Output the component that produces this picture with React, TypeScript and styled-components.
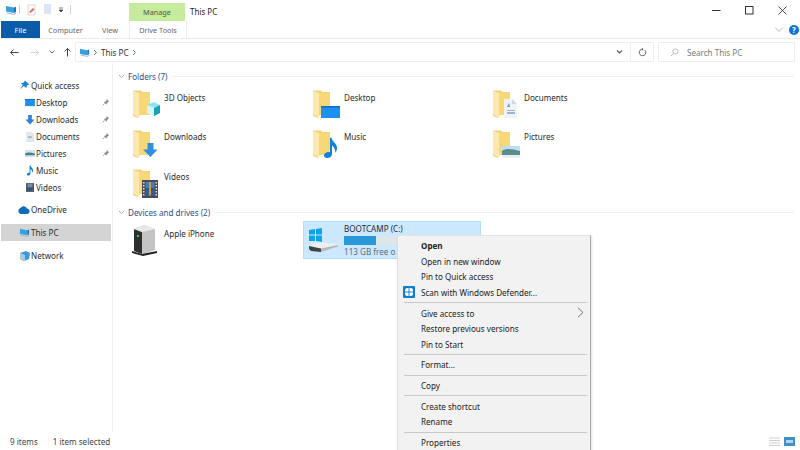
import React from 'react';
import styled, { createGlobalStyle } from 'styled-components';

const Global = createGlobalStyle`
  html, body { margin: 0; padding: 0; background: #fff; overflow: hidden; }
  body { font-family: "Noto Sans", "Open Sans", sans-serif; font-size: 8.1px; color: #2b2b2b; }
`;

const Windowed = styled.div`
  position: relative; width: 800px; height: 450px; overflow: hidden; background: #fff;
  display: flex; flex-direction: column;
`;
const TitleBar = styled.div`display: flex; height: 21px; align-items: stretch; flex: none;`;
const Qat = styled.div`display: flex; align-items: center; gap: 6px; width: 129px; padding-left: 5px; box-sizing: border-box; margin-top: -2px;`;
const QatSep = styled.span<{ $ml?: number }>`width: 1px; height: 9px; background: #cfcfcf; margin-left: ${p => p.$ml ?? 0}px;`;
const ManageTab = styled.div`
  width: 56px; margin-top: 3px; background: #c6eb9f; color: #4a5a3a;
  display: flex; align-items: center; justify-content: center; font-size: 7.3px;
`;
const WindowTitle = styled.div`padding: 2px 0 0 5px; display: flex; align-items: center; font-size: 8px; color: #222; flex: 1;`;
const WinButtons = styled.div`display: flex; align-items: center; gap: 24px; padding-right: 13px; margin-top: -1px;`;

const TabRow = styled.div`display: flex; height: 17px; flex: none; align-items: stretch; border-bottom: 1px solid #ececec; padding-left: 1px;`;
const FileTab = styled.div`width: 39px; background: #0a5ca9; color: #fff; display: flex; align-items: center; justify-content: center; font-size: 7.4px;`;
const Tab = styled.div<{ $w: number }>`width: ${p => p.$w}px; display: flex; align-items: center; justify-content: center; color: #666; font-size: 7.3px;`;
const ToolsTab = styled(Tab)`border-left: 1px solid #ececec; border-right: 1px solid #ececec;`;
const RibbonEnd = styled.div`margin-left: auto; display: flex; align-items: center; gap: 5px; padding-right: 1px;`;
const HelpDot = styled.span`width: 10px; height: 10px; border-radius: 50%; background: #0a73d1; color: #fff; font-size: 8px; font-weight: 700; display: flex; align-items: center; justify-content: center; line-height: 1;`;

const AddressRow = styled.div`display: flex; height: 24px; flex: none; align-items: center; padding: 2px 5px 0 9px; box-sizing: border-box;`;
const NavIcons = styled.div`display: flex; align-items: center; gap: 8px; width: 66px;`;
const AddressBox = styled.div`
  width: 579px; height: 20px; box-sizing: border-box; border: 1px solid #eeeeee; display: flex; align-items: center;
  padding-left: 3px; gap: 3px; font-size: 8.1px; color: #333;
`;
const AddressEnd = styled.div`margin-left: auto; display: flex; height: 100%; align-items: center;`;
const DropCell = styled.div`width: 22px; display: flex; justify-content: center; align-items: center;`;
const RefreshCell = styled.div`width: 22px; height: 100%; border-left: 1px solid #eeeeee; display: flex; align-items: center; justify-content: center;`;
const SearchBox = styled.div`
  margin-left: 4px; flex: 1; height: 20px; box-sizing: border-box; border: 1px solid #eeeeee; display: flex; align-items: center;
  padding-left: 11px; gap: 8px; color: #7a7a7a; font-size: 8.1px;
`;

const Body = styled.div`display: flex; flex: 1; min-height: 0;`;
const Sidebar = styled.div`width: 113px; flex: none; box-sizing: border-box; border-right: 1px solid #efefef; padding-top: 14px; display: flex; flex-direction: column;`;
const NavGroup = styled.div<{ $mb?: number }>`display: flex; flex-direction: column; margin-bottom: ${p => p.$mb ?? 6}px;`;
const NavRow = styled.div<{ $indent?: number; $sel?: boolean }>`
  height: 17px; display: flex; align-items: center; position: relative; margin-left: 1px; margin-right: 1px;
  padding-left: ${p => p.$indent ?? 17}px; gap: 1px; color: #2c2c2c; font-size: 8.1px;
  background: ${p => (p.$sel ? '#d4d4d4' : 'transparent')};
`;
const NavIconSlot = styled.span`width: 11px; display: flex; justify-content: center;`;
const NavPin = styled.span`position: absolute; left: 101px; top: 4px; display: flex;`;

const Content = styled.div`flex: 1; padding: 6px 0 0 5px; display: flex; flex-direction: column; min-width: 0;`;
const GroupHead = styled.div<{ $mt?: number }>`display: flex; align-items: center; height: 14px; gap: 3px; color: #2d4f8c; font-size: 8.1px; padding-right: 6px; margin-top: ${p => p.$mt ?? 0}px;`;
const GroupRule = styled.span`flex: 1; height: 1px; background: #f0f0f0; margin-left: 2px;`;
const Grid = styled.div`display: grid; grid-template-columns: repeat(3, 180px); grid-auto-rows: 39.5px; padding: 6px 0 0 15px;`;
const DriveGrid = styled(Grid)`padding-top: 1px; grid-auto-rows: 38px;`;
const Item = styled.div`display: flex; gap: 4px; font-size: 8.1px; color: #2b2b2b; line-height: 12px;`;
const ItemLabel = styled.div`padding-top: 2.5px;`;
const DriveItem = styled.div`
  margin-left: -10px; width: 178px; height: 38px; background: #cce8ff; border: 1px solid #b5dcfb; box-sizing: border-box;
  display: flex; gap: 4px; padding-left: 4px; align-items: center;
`;
const DriveInfo = styled.div`display: flex; flex-direction: column; gap: 2px; flex: 1; margin-top: 2px; font-size: 8.1px; line-height: 10px;`;
const DriveBar = styled.div`height: 9px; width: 126px; background: #dfe6ea;`;
const DriveFill = styled.div`height: 100%; background: #2898d8;`;
const DriveFree = styled.div`color: #5a6f7d; white-space: nowrap;`;
const IPhone = styled.div`display: flex; gap: 5px; font-size: 8.1px; color: #2b2b2b; line-height: 12px; padding-top: 3px; margin-left: -2px;`;
const IPhoneLabel = styled.span`padding-top: 4px;`;

const StatusBar = styled.div`height: 18px; flex: none; display: flex; align-items: center; padding: 0 5px 0 10px; gap: 15px; color: #444; font-size: 8.1px;`;
const StatusViews = styled.div`margin-left: auto; display: flex; gap: 4px; align-items: center;`;

const Menu = styled.div`
  position: absolute; left: 397px; top: 235px; width: 194px; height: 222px; background: #f2f2f2; box-sizing: border-box;
  border-right: 1px solid #a9a9a9; border-top: 1px solid #e4e4e4; border-left: 1px solid #dddddd;
  padding-top: 2px; box-shadow: 1px 1px 2px rgba(0,0,0,.12); display: flex; flex-direction: column; font-size: 8.1px; color: #222;
`;
const MenuItem = styled.div<{ $bold?: boolean }>`
  height: 15.6px; display: flex; align-items: center; padding-left: 23px; position: relative; flex: none;
  font-weight: ${p => (p.$bold ? 700 : 400)};
`;
const MenuSep = styled.div`height: 1px; background: #c8c8c8; margin: 2px 3px 2px 6px; flex: none;`;
const MenuIcon = styled.span`position: absolute; left: 5px; top: 1px; display: flex;`;
const MenuArrow = styled.span`position: absolute; right: 6px; top: 2px; display: flex;`;

const PcIcon = ({ s = 12 }: { s?: number }) => (
  <svg width={s} height={s} viewBox="0 0 12 12"><path d="M1 2l8 1.500V9L1 7.500z" fill="#3aa0e0" /><path d="M9 3.500l2-.7V8l-2 1z" fill="#1c78b8" /><path d="M2 8.500l7 1.200 2-1v1L9 10.700 2 9.500z" fill="#9db4c4" /></svg>
);
const Pin = () => (
  <svg width="8" height="8" viewBox="0 0 8 8"><path d="M4.500.800l2.700 2.700-1 .3-1.400 1.600-.2 1.300L1.800 4l1.300-.2 1.600-1.400z" fill="#8a8a8a" /><path d="M2.500 5.500L.8 7.200" stroke="#8a8a8a" strokeWidth=".8" /></svg>
);

const Folder = ({ children }: { children?: React.ReactNode }) => (
  <svg width="27" height="30" viewBox="0 0 27 30" style={{ flex: 'none' }}>
    <path d="M0 1.500h8l1.500 1.500H17V26H7l-2 3-5-2z" fill="#f3d27a" />
    <path d="M6 4h11v22H6z" fill="#f8d776" />
    <path d="M0 25l6 4V4L0 2z" fill="#fde9ae" />
    {children}
  </svg>
);

const Objects3D = () => (
  <g><path d="M14 16l7-3 6 3-6 3z" fill="#8fe4ee" /><path d="M14 16v8l7 3v-8z" fill="#d7f6f8" /><path d="M21 19l6-3v8l-6 3z" fill="#15a2b8" /></g>
);
const DesktopMini = () => <g><rect x="8" y="17" width="19" height="12" fill="#1e90f0" /><rect x="8" y="17" width="19" height="1.500" fill="#0b6cc0" /></g>;
const DownloadMini = () => <path d="M14.500 14h6v6.500h4L17.500 28 10 20.500h4.500z" fill="#2f8fe0" />;
const MusicMini = () => <path d="M17 9l1.500-.5c.5 4 5.500 6 5.500 10.500 0 2-.8 3.500-1.800 5 .3-3-.8-6-3.200-7.500V25c0 2.500-2.500 4-5 4-1.800 0-3-1-3-2.400 0-2 2.400-3.600 4.700-3.600.5 0 .9 0 1.300.2z" fill="#1282dc" />;
const DocMini = () => (
  <g><path d="M11 10h8l5 5v14H11z" fill="#f0f2f4" /><path d="M19 10l5 5h-5z" fill="#d3dbe2" /><rect x="14" y="21" width="8" height="1" fill="#9fb3c4" /><rect x="14" y="23.500" width="8" height="1" fill="#3c78b0" /><path d="M14 18l2-4 1 4z" fill="#5f9bd0" /></g>
);
const PicMini = () => (
  <g><rect x="9" y="17" width="18" height="12" fill="#b9e0f4" /><path d="M9 22c4-3 10-2 18 0v4H9z" fill="#5d8b8a" /><path d="M9 26h18v3H9z" fill="#e4eff6" /></g>
);
const VideoMini = () => (
  <g><rect x="9" y="12" width="16" height="18" fill="#4a4d55" /><rect x="12.500" y="14" width="9" height="6" fill="#3e7ec8" /><rect x="12.500" y="21.500" width="9" height="6" fill="#2e5fa0" /><path d="M16 14h2v13.500h-2z" fill="#c9a12e" />
    {[14, 17, 20, 23, 26].map(y => <g key={y}><rect x="10" y={y} width="1.500" height="1.500" fill="#ddd" /><rect x="22.500" y={y} width="1.500" height="1.500" fill="#ddd" /></g>)}</g>
);

const folders: [string, React.ReactNode][] = [
  ['3D Objects', <Objects3D />], ['Desktop', <DesktopMini />], ['Documents', <DocMini />],
  ['Downloads', <DownloadMini />], ['Music', <MusicMini />], ['Pictures', <PicMini />],
  ['Videos', <VideoMini />],
];

const Chevron = () => (
  <svg width="7" height="7" viewBox="0 0 7 7"><path d="M1 2l2.500 2.500L6 2" fill="none" stroke="#999" strokeWidth=".8" /></svg>
);
const Crumb = () => (
  <svg width="5" height="7" viewBox="0 0 5 7"><path d="M1 1l2.500 2.500L1 6" fill="none" stroke="#666" strokeWidth=".9" /></svg>
);

const navQuick: [string, React.ReactNode, boolean][] = [
  ['Desktop', <svg width="10" height="8" viewBox="0 0 11 9"><rect width="11" height="8" fill="#1e90f0" /><rect width="11" height="1" fill="#0b6cc0" /></svg>, true],
  ['Downloads', <svg width="10" height="10" viewBox="0 0 11 11"><path d="M3.500 0h4v5h3l-5 5.500L.5 5h3z" fill="#2f80d8" /></svg>, true],
  ['Documents', <svg width="10" height="10" viewBox="0 0 11 11"><path d="M2 0h5l2.500 2.500V11H2z" fill="#e4e9ee" stroke="#c4ccd4" strokeWidth=".4" /><rect x="3.500" y="5" width="4" height="1.200" fill="#5f9bd0" /></svg>, true],
  ['Pictures', <svg width="10" height="8" viewBox="0 0 11 9"><rect width="11" height="8" fill="#cde6f4" /><path d="M0 4c3-2 6-1 11 0v2H0z" fill="#4f7d86" /></svg>, true],
  ['Music', <svg width="10" height="11" viewBox="0 0 11 11"><path d="M5 0l1-.1c.2 2 3 3 3 5.500 0 1-.4 1.800-.9 2.500.1-1.500-.6-3-2.100-3.700V9c0 1.200-1.200 2-2.500 2C2.600 11 2 10.500 2 9.800 2 8.700 3.400 8 4.500 8c.2 0 .4 0 .5.100z" fill="#1282dc" /></svg>, false],
  ['Videos', <svg width="8" height="11" viewBox="0 0 10 11"><rect width="10" height="11" fill="#555860" /><rect x="2" y="1" width="6" height="4" fill="#6b8fb8" /><rect x="2" y="6" width="6" height="4" fill="#37557c" /></svg>, false],
];

export default function App() {
  return (
    <Windowed>
      <Global />
      <TitleBar>
        <Qat>
          <PcIcon s={12} />
          <QatSep $ml={-4} />
          <svg width="11" height="12" viewBox="0 0 11 12"><path d="M2 1h7v10H2z" fill="#fff" stroke="#c9c9c9" strokeWidth=".7" /><path d="M3 8l4-4 1.500 1.500-4 3.500z" fill="#e2694a" /></svg>
          <svg width="9" height="11" viewBox="0 0 9 11"><rect x="1" width="7" height="10" fill="#dfe6f3" /></svg>
          <svg width="6" height="6" viewBox="0 0 6 6"><path d="M1 1h4M1 3l2 2 2-2z" stroke="#444" strokeWidth=".7" fill="#444" /></svg>
          <QatSep />
        </Qat>
        <ManageTab>Manage</ManageTab>
        <WindowTitle>This PC</WindowTitle>
        <WinButtons>
          <svg width="9" height="9" viewBox="0 0 9 9"><path d="M0 4.500h8.500" stroke="#333" /></svg>
          <svg width="9" height="9" viewBox="0 0 9 9"><rect x=".5" y=".5" width="7.500" height="7.500" fill="none" stroke="#333" /></svg>
          <svg width="9" height="9" viewBox="0 0 9 9"><path d="M.5.500l8 8M8.500.500l-8 8" stroke="#333" strokeWidth=".9" /></svg>
        </WinButtons>
      </TitleBar>
      <TabRow>
        <FileTab>File</FileTab>
        <Tab $w={51}>Computer</Tab>
        <Tab $w={38}>View</Tab>
        <ToolsTab $w={56}>Drive Tools</ToolsTab>
        <RibbonEnd>
          <svg width="10" height="7" viewBox="0 0 10 7"><path d="M1 1.500l4 4 4-4" fill="none" stroke="#bbb" /></svg>
          <HelpDot>?</HelpDot>
        </RibbonEnd>
      </TabRow>
      <AddressRow>
        <NavIcons>
          <svg width="10" height="9" viewBox="0 0 10 9"><path d="M9.500 4.500H1.500M4.500 1.500l-3 3 3 3" fill="none" stroke="#444" strokeWidth="1" /></svg>
          <svg width="10" height="9" viewBox="0 0 10 9" style={{ marginLeft: 3 }}><path d="M.5 4.500h8M5.500 1.500l3 3-3 3" fill="none" stroke="#d6d6d6" strokeWidth="1" /></svg>
          <svg width="6" height="6" viewBox="0 0 6 6" style={{ marginLeft: 1 }}><path d="M.5 1.500L3 4l2.500-2.500" fill="none" stroke="#666" /></svg>
          <svg width="9" height="10" viewBox="0 0 9 10"><path d="M4.500 9.500V1.500M1.500 4.500l3-3 3 3" fill="none" stroke="#444" strokeWidth="1" /></svg>
        </NavIcons>
        <AddressBox>
          <PcIcon s={11} />
          <Crumb />
          <span>This PC</span>
          <Crumb />
          <AddressEnd>
            <DropCell><svg width="7" height="6" viewBox="0 0 7 6"><path d="M1 1.500L3.500 4 6 1.500" fill="none" stroke="#555" strokeWidth="1.100" /></svg></DropCell>
            <RefreshCell><svg width="9" height="9" viewBox="0 0 9 9"><path d="M6.800 2a3.300 3.300 0 1 1-2.300-.9" fill="none" stroke="#555" strokeWidth=".9" /><path d="M4 0l1.500 1.200L4 2.400z" fill="#555" /></svg></RefreshCell>
          </AddressEnd>
        </AddressBox>
        <SearchBox>
          <svg width="9" height="9" viewBox="0 0 9 9"><circle cx="5.500" cy="3.500" r="2.600" fill="none" stroke="#aaa" strokeWidth=".8" /><path d="M3.500 5.500L1 8" stroke="#aaa" strokeWidth=".9" /></svg>
          <span>Search This PC</span>
        </SearchBox>
      </AddressRow>
      <Body>
        <Sidebar>
          <NavGroup $mb={5}>
            <NavRow $indent={18}>
              <svg width="11" height="11" viewBox="0 0 11 11"><path d="M6 .5l4.500 4.200-2.300.4-1 2.800L4.800 6 1 9.800 3.800 5 2 3.200l2.700-.7z" fill="#1c7fd6" /></svg>
              <span>Quick access</span>
            </NavRow>
            {navQuick.map(([label, icon, pin]) => (
              <NavRow key={label} $indent={23}>
                <NavIconSlot>{icon}</NavIconSlot>
                <span>{label}</span>
                {pin && <NavPin><Pin /></NavPin>}
              </NavRow>
            ))}
          </NavGroup>
          <NavGroup>
            <NavRow>
              <svg width="12" height="8" viewBox="0 0 12 8"><path d="M3 8a3 3 0 0 1-.4-5.900A3.500 3.500 0 0 1 9 2.500 2.800 2.800 0 0 1 9.500 8z" fill="#0f6cbd" /></svg>
              <span>OneDrive</span>
            </NavRow>
          </NavGroup>
          <NavGroup>
            <NavRow $sel $indent={18}>
              <PcIcon s={11} />
              <span>This PC</span>
            </NavRow>
          </NavGroup>
          <NavGroup>
            <NavRow $indent={18}>
              <svg width="11" height="10" viewBox="0 0 11 10"><path d="M1 2l6-2 4 2-1 6-5 2-4-2z" fill="#3a9ad9" /><path d="M1 2l5 2v6l-5-2z" fill="#a8cce4" /></svg>
              <span>Network</span>
            </NavRow>
          </NavGroup>
        </Sidebar>
        <Content>
          <GroupHead><Chevron /><span>Folders (7)</span><GroupRule /></GroupHead>
          <Grid>
            {folders.map(([label, mini]) => (
              <Item key={label}><Folder>{mini}</Folder><ItemLabel>{label}</ItemLabel></Item>
            ))}
          </Grid>
          <GroupHead $mt={-2}><Chevron /><span>Devices and drives (2)</span><GroupRule /></GroupHead>
          <DriveGrid>
            <IPhone>
              <svg width="28" height="32" viewBox="0 0 28 32" style={{ flex: 'none' }}>
                <path d="M3 5l10-4 11 4v21l-11 4-10-3z" fill="#c4c4c4" />
                <path d="M3 5l8 3v22l-8-3z" fill="#2f2f2f" />
                <path d="M3 5l10-4 11 4-13 3z" fill="#e8e8e8" />
                <rect x="6" y="11" width="2" height="2" fill="#35c85a" />
                <path d="M1 27l10 3 15-3v2l-14 3-11-3z" fill="#222" />
              </svg>
              <IPhoneLabel>Apple iPhone</IPhoneLabel>
            </IPhone>
            <DriveItem>
              <svg width="32" height="26" viewBox="0 0 32 26" style={{ flex: 'none' }}>
                <path d="M1 3l6-1v5.500H1zM8 2l6-1v6.500H8zM1 8.500h6V14H1zM8 8.500h6V15l-6-1z" fill="#0ea5e8" />
                <path d="M4 17l8-2 18 2-3 4-14 2-10-2z" fill="#eceff1" />
                <path d="M1 19l12 2.500V25L3 24l-2-2z" fill="#3f4347" />
                <path d="M13 21.500L30 18v1.500L13 25z" fill="#b4b9bd" />
              </svg>
              <DriveInfo>
                <span>BOOTCAMP (C:)</span>
                <DriveBar><DriveFill style={{ width: `${(32 / 126) * 100}%` }} /></DriveBar>
                <DriveFree>113 GB free o</DriveFree>
              </DriveInfo>
            </DriveItem>
          </DriveGrid>
        </Content>
      </Body>
      <StatusBar>
        <span>9 items</span>
        <span>1 item selected</span>
        <StatusViews>
          <svg width="11" height="9" viewBox="0 0 11 9"><path d="M0 1h11M0 3.500h11M0 6h11M0 8.500h11" stroke="#cfcfcf" /></svg>
          <svg width="11" height="9" viewBox="0 0 11 9"><rect width="11" height="9" fill="#3f8fc8" /><rect x="2" y="3" width="7" height="3" fill="#b4d4e8" /></svg>
        </StatusViews>
      </StatusBar>
      <Menu>
        <MenuItem $bold>Open</MenuItem>
        <MenuItem>Open in new window</MenuItem>
        <MenuItem>Pin to Quick access</MenuItem>
        <MenuItem>
          <MenuIcon>
            <svg width="12" height="12" viewBox="0 0 12 12"><rect width="12" height="12" rx="1" fill="#0f7dd0" /><rect x="2" y="2" width="8" height="8" rx="2.500" fill="#fff" /><path d="M6 2v8M2 6h8" stroke="#0f7dd0" strokeWidth=".9" /></svg>
          </MenuIcon>
          Scan with Windows Defender...
        </MenuItem>
        <MenuSep />
        <MenuItem>Give access to<MenuArrow><svg width="7" height="11" viewBox="0 0 7 11"><path d="M1 .800l5 4.700-5 4.700" fill="none" stroke="#666" strokeWidth=".9" /></svg></MenuArrow></MenuItem>
        <MenuItem>Restore previous versions</MenuItem>
        <MenuItem>Pin to Start</MenuItem>
        <MenuSep />
        <MenuItem>Format...</MenuItem>
        <MenuSep />
        <MenuItem>Copy</MenuItem>
        <MenuSep />
        <MenuItem>Create shortcut</MenuItem>
        <MenuItem>Rename</MenuItem>
        <MenuSep />
        <MenuItem>Properties</MenuItem>
      </Menu>
    </Windowed>
  );
}
